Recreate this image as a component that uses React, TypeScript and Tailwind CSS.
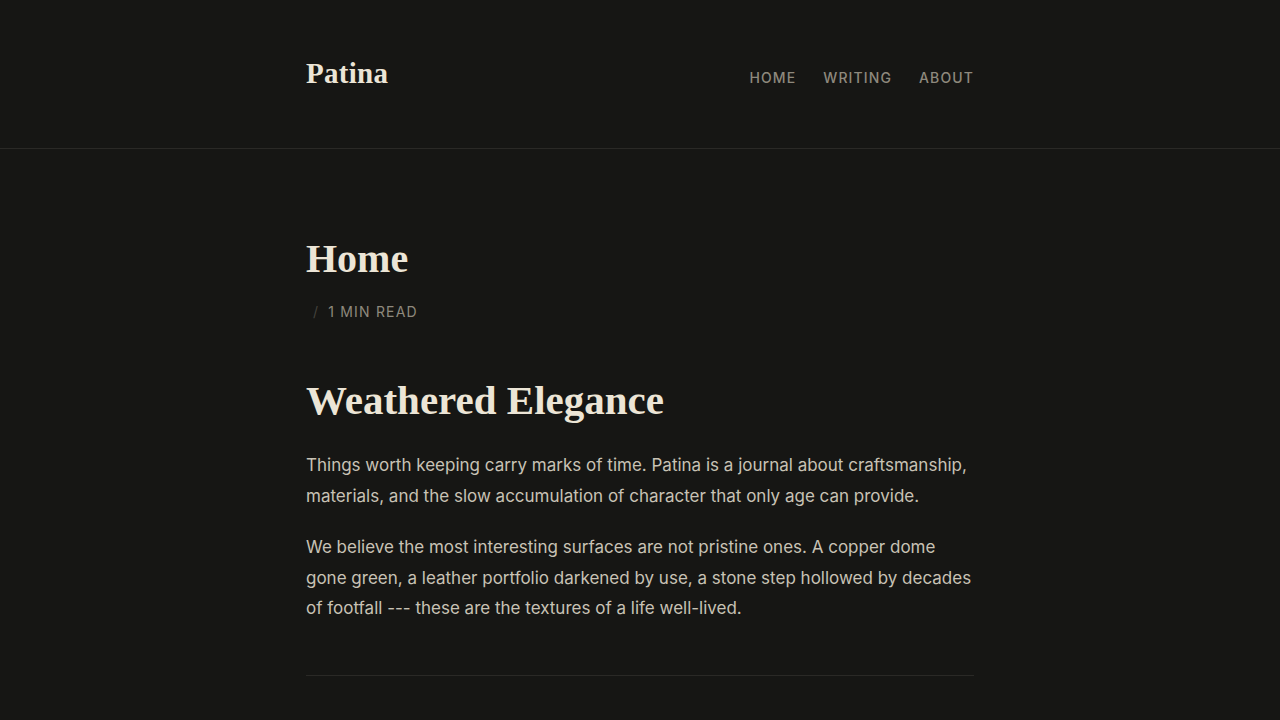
const navItems = ["Home", "Writing", "About"];

const serif = "font-['Liberation_Serif','DejaVu_Serif',serif]";

export default function App() {
  return (
    <div className="min-h-screen bg-[#161614] font-['Inter','Noto_Sans',sans-serif] text-[#c8c2b5]">
      <header className="border-b border-[#2a2926]">
        <div className="mx-auto flex h-[148px] w-[668px] items-center pb-[2px]">
          <div className="flex w-full items-baseline justify-between">
            <a className={`${serif} text-[29px] font-bold leading-tight tracking-[0.01em] text-[#ece5d6]`}>
              Patina
            </a>
            <nav className="flex gap-[27px]">
              {navItems.map((item) => (
                <a
                  key={item}
                  className="text-[14px] font-medium uppercase tracking-[0.08em] text-[#8e897d]"
                >
                  {item}
                </a>
              ))}
            </nav>
          </div>
        </div>
      </header>

      <main className="mx-auto w-[668px] pt-[88px]">
        <h1 className={`${serif} text-[40px] font-bold leading-[44px] text-[#ece5d6]`}>
          Home
        </h1>
        <div className="mt-[21px] flex items-center gap-[9px] pl-[7px] text-[14px] uppercase leading-5 tracking-[0.085em] text-[#8e897d]">
          <span className="text-[#44423d]">/</span>
          <span>1 min read</span>
        </div>

        <article className="mt-[56px]">
          <h2 className={`${serif} text-[41px] font-bold leading-[44px] text-[#ece5d6]`}>
            Weathered Elegance
          </h2>
          <p className="mt-[28px] text-[17px] leading-[1.8]">
            Things worth keeping carry marks of time. Patina is a journal about craftsmanship,
            materials, and the slow accumulation of character that only age can provide.
          </p>
          <p className="mt-[21px] text-[17px] leading-[1.8]">
            We believe the most interesting surfaces are not pristine ones. A copper dome gone
            green, a leather portfolio darkened by use, a stone step hollowed by decades of
            footfall --- these are the textures of a life well-lived.
          </p>
        </article>

        <hr className="mt-[51px] border-[#2a2926]" />
      </main>
    </div>
  );
}
